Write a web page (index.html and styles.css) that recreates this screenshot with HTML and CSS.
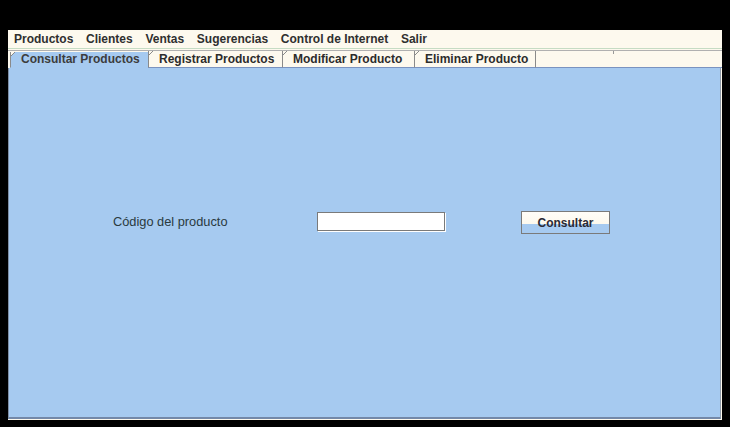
FILE: index.html
```html
<!DOCTYPE html>
<html lang="es">
<head>
<meta charset="utf-8">
<title>Productos</title>
<link rel="stylesheet" href="styles.css">
</head>
<body>
<div class="window">
  <nav class="menubar">
    <span class="menu-item">Productos</span>
    <span class="menu-item">Clientes</span>
    <span class="menu-item">Ventas</span>
    <span class="menu-item">Sugerencias</span>
    <span class="menu-item">Control de Internet</span>
    <span class="menu-item">Salir</span>
  </nav>
  <div class="menu-line"></div>
  <div class="tabstrip">
    <div class="tab tab-active">Consultar Productos</div>
    <div class="tab t2">Registrar Productos</div>
    <div class="tab t3">Modificar Producto</div>
    <div class="tab t4">Eliminar Producto</div>
    <div class="tab-filler"></div>
    <div class="tab-rest"></div>
  </div>
  <div class="panel">
    <div class="form-row">
      <label class="field-label">Código del producto</label>
      <input class="field-input" type="text">
      <button class="btn">Consultar</button>
    </div>
  </div>
</div>
</body>
</html>
```
FILE: styles.css
```css
html, body {
  margin: 0;
  padding: 0;
  background: #000;
  width: 730px;
  height: 427px;
  overflow: hidden;
}
.window {
  margin: 30px 0 0 8px;
  width: 714px;
  height: 390px;
  background: #fdf9ee;
  display: flex;
  flex-direction: column;
  font-family: "Liberation Sans", Arial, sans-serif;
}
.menubar {
  height: 18px;
  display: flex;
  align-items: center;
  padding-left: 6px;
  gap: 12.7px;
  font-weight: bold;
  font-size: 12px;
  color: #2f2f2f;
}
.menu-line {
  height: 1px;
  background: #c6dcc4;
  margin-bottom: 1px;
}
.tabstrip {
  height: 18px;
  display: flex;
  border-top: 1px solid #b0b0b0;
  box-sizing: border-box;
  padding-left: 2px;
  font-size: 12px;
  font-weight: bold;
  color: #2c2c2c;
}
.tab {
  position: relative;
  box-sizing: border-box;
  height: 17px;
  line-height: 16px;
  padding-left: 10px;
  border-left: 1px solid #8a8a8a;
  border-bottom: 1px solid #7a93c0;
  background: #fdf9ee;
}
.tab::before {
  content: "";
  position: absolute;
  left: 0;
  top: 0;
  width: 4px;
  height: 4px;
  background: linear-gradient(135deg, #fdf9ee 45%, #8a8a8a 50%, transparent 60%);
}
.tab-active {
  width: 138px;
  background: #a6caf0;
  color: #3c3c3c;
  border-bottom-color: #a6caf0;
  margin-top: 1px;
  height: 16px;
  line-height: 15px;
}
.t2 { width: 134px; }
.t3 { width: 132px; }
.t4 { width: 122px; border-right: 1px solid #8a8a8a; }
.tab-filler {
  position: relative;
  width: 78px;
  border-bottom: 1px solid #7a93c0;
  height: 17px;
  box-sizing: border-box;
}
.tab-filler::after {
  content: "";
  position: absolute;
  right: 0;
  top: 0;
  width: 1px;
  height: 3px;
  background: #9a9a9a;
}
.tab-rest {
  flex: 1;
  border-bottom: 1px solid #7a93c0;
  height: 17px;
  box-sizing: border-box;
}
.panel {
  box-sizing: border-box;
  height: 351px;
  background: #a6caf0;
  border-left: 1px solid #7f8fa6;
  border-right: 1px solid #8f9aa8;
  border-bottom: 2px solid #7388a8;
  margin-right: 1px;
}
.form-row {
  display: flex;
  align-items: center;
  padding-top: 143px;
  padding-left: 104px;
}
.field-label {
  font-size: 12.8px;
  color: #2a3a40;
  width: 204px;
  position: relative;
  top: -1px;
}
.field-input {
  box-sizing: border-box;
  width: 128px;
  height: 19px;
  margin: 0 0 2px 0;
  padding: 0;
  background: #fff;
  border: 1px solid #7a7a7a;
  box-shadow: 1px 1px 0 #fff;
}
.btn {
  box-sizing: border-box;
  margin: 0 0 0 76px;
  width: 89px;
  height: 23px;
  padding: 0;
  border: 1px solid #7a7a7a;
  background: linear-gradient(#fffdf8 0, #fdf9ee 55%, #a6caf0 58%, #a6caf0 100%);
  font-family: "Liberation Sans", Arial, sans-serif;
  font-size: 12px;
  font-weight: bold;
  color: #2a2a35;
}
```
